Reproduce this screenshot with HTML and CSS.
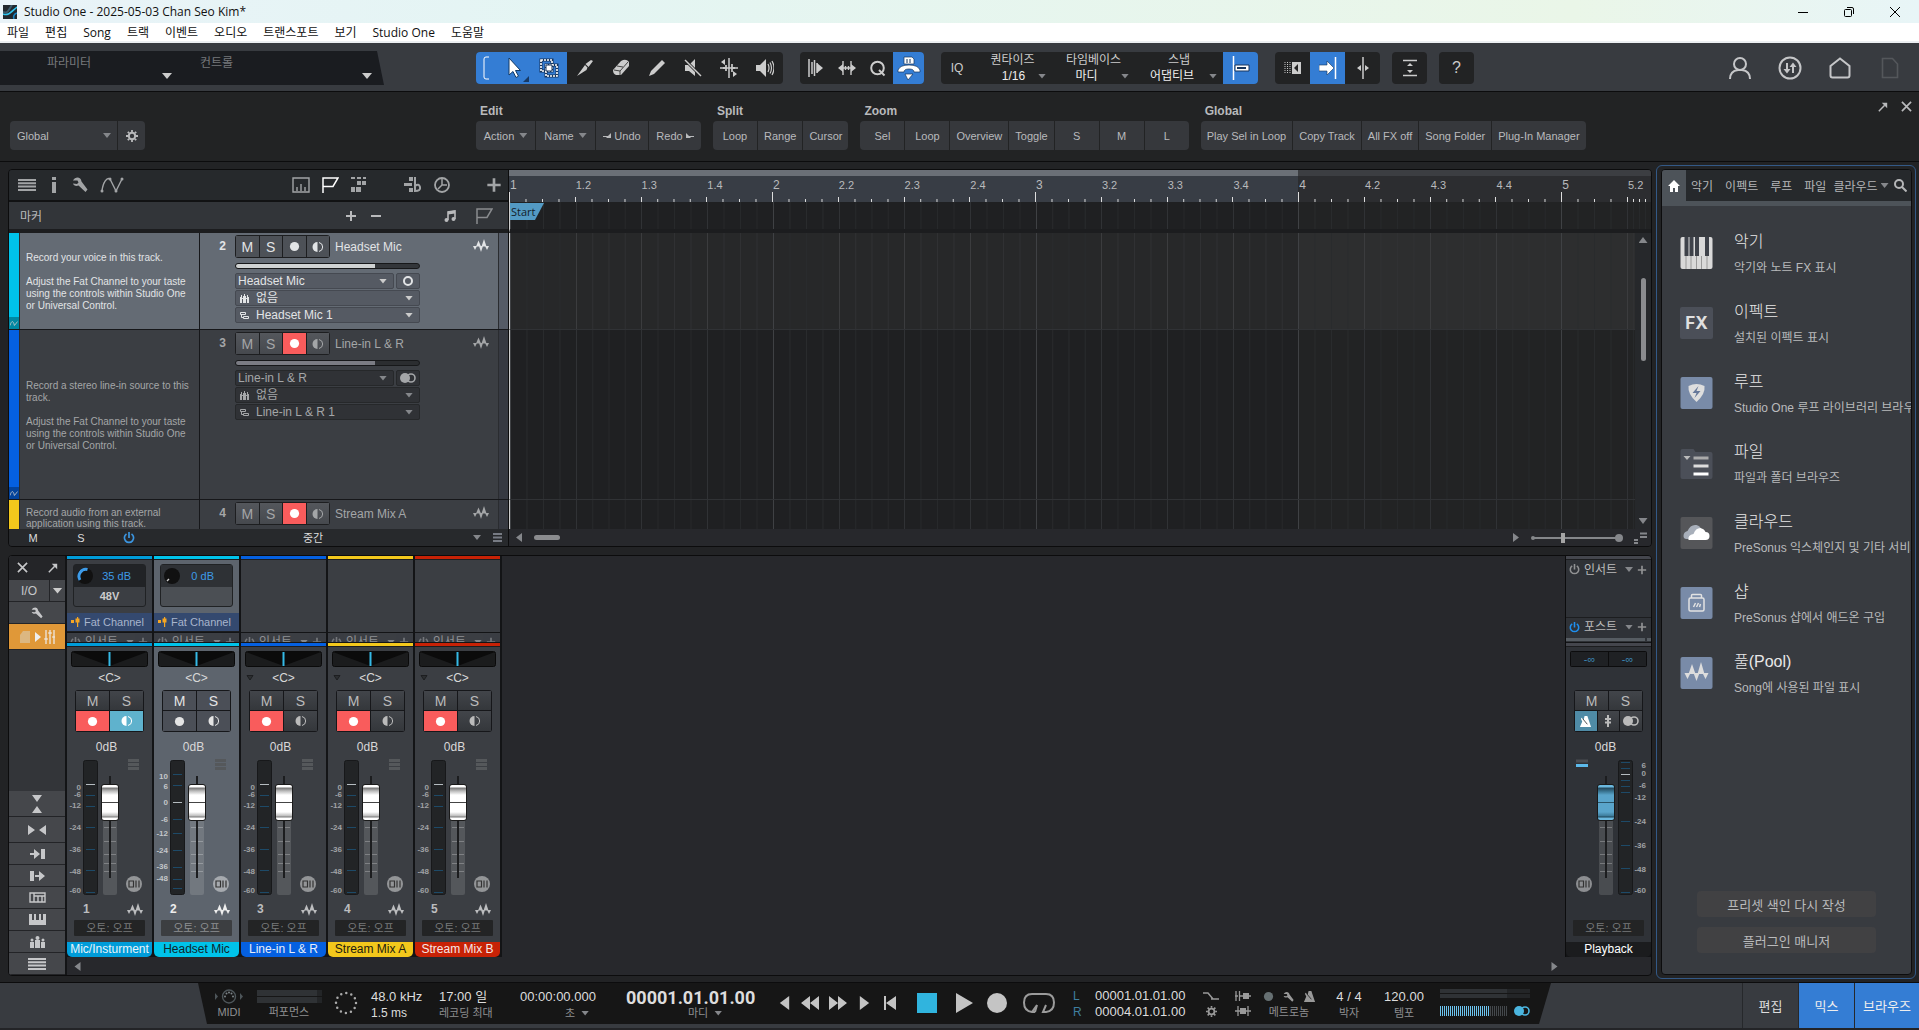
FILE: index.html
```html
<!DOCTYPE html>
<html lang="ko">
<head>
    <meta charset="UTF-8">
    <meta name="viewport" content="width=device-width, initial-scale=1.0">
    <title>Studio One - 2025-05-03 Chan Seo Kim*</title>
    <link rel="stylesheet" href="styles.css">
</head>
<body>
    <svg class="sprite" aria-hidden="true">
        <symbol id="wave" viewBox="0 0 16 13"><path fill="currentColor" d="M0 7h4l-2 4zM3 7.500l2.500-6L8 7.500zM6 7h4l-2 6zM8.500 7.500L11 0l2.500 7.500zM12 7h4l-2 4z"/></symbol>
        <symbol id="half" viewBox="0 0 12 12"><path fill="currentColor" d="M5.500 1v10a5 5 0 0 1 0-10z"/><path fill="none" stroke="currentColor" d="M7 1.500a4.600 4.600 0 0 1 0 9"/></symbol>
        <symbol id="dot" viewBox="0 0 12 12"><circle cx="6" cy="6" r="5" fill="currentColor"/></symbol>
        <symbol id="ring" viewBox="0 0 12 12"><circle cx="6" cy="6" r="4" fill="none" stroke="currentColor" stroke-width="2"/></symbol>
        <symbol id="stereo" viewBox="0 0 16 10"><circle cx="5" cy="5" r="5" fill="currentColor"/><circle cx="11" cy="5" r="4" fill="none" stroke="currentColor" stroke-width="1.600"/></symbol>
        <symbol id="wrench" viewBox="0 0 16 16"><path fill="currentColor" d="M1 3.500C3-.5 9-.5 9.500 4.500L15.500 12.500 13.500 15 6.500 8.500C4 9.500 1.500 8.500 1 6.500L5 7 6.500 5.500 5.500 3.500z"/></symbol>
        <symbol id="gear" viewBox="0 0 12 12"><circle cx="6" cy="6" r="3.200" fill="none" stroke="currentColor" stroke-width="2"/><path stroke="currentColor" stroke-width="1.800" d="M6 0v2M6 10v2M0 6h2M10 6h2M1.800 1.800l1.400 1.400M8.800 8.800l1.400 1.400M10.200 1.800L8.800 3.200M3.200 8.800l-1.400 1.400"/></symbol>
        <symbol id="flag" viewBox="0 0 17 16"><path fill="none" stroke="currentColor" stroke-width="1.500" d="M1 16V1h15l-5 8.500H1"/></symbol>
        <symbol id="power" viewBox="0 0 12 12"><path fill="none" stroke="currentColor" stroke-width="1.700" d="M3.500 2a4.600 4.600 0 1 0 5 0M6 0v6"/></symbol>
        <symbol id="plus" viewBox="0 0 12 12"><path stroke="currentColor" stroke-width="2" d="M6 1v10M1 6h10"/></symbol>
        <symbol id="close" viewBox="0 0 12 12"><path stroke="currentColor" stroke-width="1.800" d="M1 1l10 10M11 1L1 11"/></symbol>
        <symbol id="popout" viewBox="0 0 12 12"><path stroke="currentColor" stroke-width="1.800" d="M1 11l7-7"/><path fill="currentColor" d="M4.500 1H11v6.500z"/></symbol>
        <symbol id="lines" viewBox="0 0 18 12"><path stroke="currentColor" stroke-width="2" d="M0 1h18M0 4.300h18M0 7.600h18M0 11h18"/></symbol>
        <symbol id="fork" viewBox="0 0 9 9"><path fill="currentColor" d="M1 1h1v2H1zM4 0h1v2H4zM7 1h1v2H7zM0 3h2v6H0zM3 2h3v7H3zM7 3h2v6H7zM2 4h5v1H2z"/></symbol>
        <symbol id="layers" viewBox="0 0 9 9"><path fill="none" stroke="currentColor" d="M.5 1.500h5v2h-5zM3.500 5.500h5v2h-5zM1.500 4v2.500h2"/></symbol>
        <symbol id="curve" viewBox="0 0 10 8"><path fill="none" stroke="currentColor" d="M0 6.500C2 0 4 0 5.500 6.500L9.500 1.500"/></symbol>
        <symbol id="metro" viewBox="0 0 14 14"><path fill="currentColor" d="M6 1h3l4 12H1l2.500-6L2 4l1-1 2 2z"/><path stroke="#161616" stroke-width=".8" d="M4 4l5 6"/></symbol>
        <symbol id="tri-l" viewBox="0 0 8 12"><path fill="currentColor" d="M8 0v12L0 6z"/></symbol>
        <symbol id="tri-r" viewBox="0 0 8 12"><path fill="currentColor" d="M0 0v12l8-6z"/></symbol>
        <symbol id="fx-chip" viewBox="0 0 10 10"><path fill="#f5a623" d="M0 3h3v3H0zM4.500 1.500h4v4h-4zM6 0h1.200v10H6z"/></symbol>
    </svg>

    <header class="titlebar">
        <svg class="app-icon" viewBox="0 0 14 14"><rect width="14" height="14" fill="#22282d"/><path d="M0 7c5 2 6-3 9-7" fill="none" stroke="#3d5a6a" stroke-width="2"/><path d="M0 9c5 2 7-1 14-7" fill="none" stroke="#30c4ee" stroke-width="1.500"/><path d="M11 14c-1-3 0-5 3-6" fill="none" stroke="#1784c4" stroke-width="1.500"/></svg>
        <span>Studio One - 2025-05-03 Chan Seo Kim*</span>
        <div class="window-buttons">
            <button aria-label="Minimize"><svg viewBox="0 0 10 10"><path d="M0 5.500h10" stroke="#000"/></svg></button>
            <button aria-label="Restore"><svg viewBox="0 0 10 10"><rect x=".5" y="2.500" width="7" height="7" rx="1" fill="none" stroke="#000"/><path d="M3 .5h5a1.500 1.500 0 0 1 1.500 1.500v5" fill="none" stroke="#000"/></svg></button>
            <button aria-label="Close"><svg viewBox="0 0 10 10"><path d="M0 0l10 10M10 0L0 10" stroke="#000"/></svg></button>
        </div>
    </header>

    <nav class="menu">
        <a href="#">파일</a><a href="#">편집</a><a href="#">Song</a><a href="#">트랙</a><a href="#">이벤트</a><a href="#">오디오</a><a href="#">트랜스포트</a><a href="#">보기</a><a href="#">Studio One</a><a href="#">도움말</a>
    </nav>

    <div class="toolbar">
        <div class="param-display">
            <div class="param"><span>파라미터</span><i class="arrow light"></i></div>
            <div class="param wide"><span>컨트롤</span><i class="arrow light"></i></div>
        </div>
        <div class="tools main-tools">
            <button class="on bracket" aria-label="Tool link"><svg width="6" height="24" viewBox="0 0 6 24"><path d="M6 1H3Q1 1 1 3v18q0 2 2 2h3" fill="none" stroke="#fff"/></svg></button>
            <button class="on" aria-label="Arrow tool"><svg width="32" height="28" viewBox="0 0 32 28"><path d="M12 4v17l4-3.500 3 6 2.500-1.300-3-5.700h5z" fill="#fff" stroke="#123a66"/><path d="M32 22v6h-6z" fill="#173a66"/></svg></button>
            <button class="on" aria-label="Range tool"><svg width="20" height="20" viewBox="0 0 20 20"><path d="M2 2h11v11H2zM7 7h11v11H7z" fill="none" stroke="#16355c" stroke-width="3"/><path d="M2 2h11v11H2zM7 7h11v11H7z" fill="none" stroke="#fff" stroke-width="1.600" stroke-dasharray="2 1"/><path d="M7 7h6v6H7z" fill="#fff" stroke="#16355c"/></svg></button>
            <button aria-label="Split tool"><svg width="18" height="18" viewBox="0 0 18 18"><path d="M1 17L9 6l2.500 2.500-1 2.500zM9.500 5L15 1l2 1-4.500 6z" fill="currentColor"/></svg></button>
            <button aria-label="Eraser tool"><svg width="18" height="18" viewBox="0 0 18 18"><path d="M1 11L9 2q5-3 8 1v4l-8 9H4q-3-1-3-5z" fill="currentColor"/><path d="M2 11l6 1 8-9M8 12v4M5 7l6 1" fill="none" stroke="#333" stroke-width=".9"/></svg></button>
            <button aria-label="Paint tool"><svg width="18" height="18" viewBox="0 0 18 18"><path d="M1 17l2-5L14 1l3 3L6 15z" fill="currentColor"/></svg></button>
            <button aria-label="Mute tool"><svg width="18" height="18" viewBox="0 0 18 18"><path d="M1 6h4l6-6v17l-6-5H1z" fill="currentColor"/><path d="M1 1l16 16" stroke="#222" stroke-width="3"/><path d="M1 1l16 16" stroke="currentColor" stroke-width="1.500"/></svg></button>
            <button aria-label="Bend tool"><svg width="18" height="20" viewBox="0 0 18 20"><path d="M9 0v20" stroke="currentColor" stroke-width="1.500"/><path d="M0 10h18M6 7v6M12 6v8M4 9v2M14 9v2" stroke="currentColor" stroke-width="1.700"/><path d="M1 4l4-3v6zM17 16l-4-3v6z" fill="currentColor"/></svg></button>
            <button aria-label="Listen tool"><svg width="18" height="18" viewBox="0 0 18 18"><path d="M0 6h4l6-6v18l-6-6H0z" fill="currentColor"/><path d="M12 5q2 4 0 8M14 3.500q3 5.500 0 11M16 2q4 7 0 14" fill="none" stroke="currentColor" stroke-width="1.200"/></svg></button>
        </div>
        <div class="tools audio-tools">
            <button aria-label="Tab to transient"><svg width="16" height="18" viewBox="0 0 16 18"><path d="M1 0v18M4 3v12M6.500 1v16M9 4v10" stroke="currentColor" stroke-width="1.500"/><path d="M9 4l6 5-6 5z" fill="currentColor"/></svg></button>
            <button aria-label="Stretch"><svg width="18" height="18" viewBox="0 0 18 18"><path d="M5 2v14M13 2v14M5 9h8M7.500 7v4M10.500 7v4" stroke="currentColor" stroke-width="1.400"/><path d="M0 9l5-4v8zM18 9l-5-4v8z" fill="currentColor"/></svg></button>
            <button aria-label="Quantize"><svg width="16" height="17" viewBox="0 0 16 17"><circle cx="7.500" cy="8" r="6.300" fill="none" stroke="currentColor" stroke-width="2"/><path d="M9 10l5.500 5.500" stroke="currentColor" stroke-width="2"/></svg></button>
            <button class="on" aria-label="Macro bar"><svg width="24" height="24" viewBox="0 0 24 24"><path d="M1 14q2-5 11-5t11 5v2h-6q0-3-5-3t-5 3H1z" fill="#fff" stroke="#16355c" stroke-width=".7"/><path d="M8 18h8l-5 6zM7 1h8l2 2v5H7z" fill="#fff" stroke="#16355c" stroke-width=".7"/><path d="M10 3v4M13 3v4" stroke="#16355c"/></svg></button>
        </div>
        <div class="tools">
            <button class="iq">IQ</button>
            <div class="drop q1"><label for="quantize">퀀타이즈</label><select id="quantize"><option>1/16</option></select><i class="arrow"></i></div>
            <div class="drop q2"><label for="timebase">타임베이스</label><select id="timebase"><option>마디</option></select><i class="arrow"></i></div>
            <div class="drop q3"><label for="snap">스냅</label><select id="snap"><option>어댑티브</option></select><i class="arrow"></i></div>
            <button class="on" aria-label="Snap to grid"><svg width="18" height="24" viewBox="0 0 18 24"><path d="M1.500 0v24" stroke="#fff" stroke-width="1.500"/><path d="M3 9h14v6H3z" fill="#fff" stroke="#16355c"/><path d="M5 12h9" stroke="#16355c" stroke-width="2"/></svg></button>
        </div>
        <div class="tools">
            <button aria-label="Autoscroll"><svg width="18" height="14" viewBox="0 0 18 14"><path d="M1 1v12M3.500 1v12M6 1v12" stroke="currentColor" stroke-dasharray="1 1"/><path d="M8 1h9v12H8z" fill="currentColor"/><path d="M14 3v8l-4-4z" fill="#222"/></svg></button>
            <button class="on" aria-label="Follow playback"><svg width="18" height="22" viewBox="0 0 18 22"><path d="M0 8h8V4l7 7-7 7v-4H0z" fill="#fff" stroke="#16355c" stroke-width=".6"/><path d="M16.500 0v22" stroke="#fff" stroke-width="1.500"/></svg></button>
            <button aria-label="Cursor follow"><svg width="12" height="22" viewBox="0 0 12 22"><path d="M6 0v22" stroke="currentColor" stroke-width="1.500"/><path d="M0 11l4-3v6zM12 11L8 8v6z" fill="currentColor"/></svg></button>
        </div>
        <div class="tools small-gap">
            <button aria-label="Auto zoom"><svg width="16" height="18" viewBox="0 0 16 18"><path d="M1 1.500h14M1 16.500h14" stroke="currentColor" stroke-width="1.500"/><path d="M8 4l3 3H5zM8 14l3-3H5z" fill="currentColor"/></svg></button>
        </div>
        <div class="tools small-gap">
            <button class="help" aria-label="Help">?</button>
        </div>
        <div class="global-links">
            <button aria-label="Account"><svg width="24" height="22" viewBox="0 0 24 22"><circle cx="12" cy="7" r="6" fill="none" stroke="currentColor" stroke-width="2"/><path d="M2 22q0-8 8-9h4q8 1 8 9" fill="none" stroke="currentColor" stroke-width="2"/></svg></button>
            <button aria-label="Sync"><svg width="24" height="24" viewBox="0 0 24 24"><circle cx="12" cy="12" r="10.500" fill="none" stroke="currentColor" stroke-width="2"/><path d="M9 7v8M15 9v8" stroke="currentColor" stroke-width="2"/><path d="M5.500 13h7L9 17.500zM11.500 11h7L15 6.500z" fill="currentColor"/></svg></button>
            <button aria-label="Start page"><svg width="22" height="22" viewBox="0 0 22 22"><path d="M1.500 9L11 1.500 20.500 9v9.500q0 2-2 2h-15q-2 0-2-2z" fill="none" stroke="currentColor" stroke-width="2"/></svg></button>
            <button class="dim" aria-label="Document"><svg width="18" height="22" viewBox="0 0 18 22"><path d="M1.500 1.500h10L16.500 7v13.500h-15z" fill="none" stroke="currentColor" stroke-width="1.600"/></svg></button>
        </div>
    </div>

    <div class="macro-bar">
        <div class="macro-page">
            <div class="select-box"><select aria-label="Macro page"><option>Global</option></select><i class="arrow"></i></div>
            <button aria-label="Macro settings"><svg width="12" height="12"><use href="#gear"/></svg></button>
        </div>
        <div class="macro-group"><h2>Edit</h2><div class="macros"><button class="menu-btn">Action <i class="arrow"></i></button><button class="menu-btn">Name <i class="arrow"></i></button><button class="step"><svg width="8" height="6" viewBox="0 0 8 6"><path d="M0 3.500h5" stroke="currentColor"/><path d="M8 0v5H3z" fill="currentColor"/></svg>Undo</button><button class="step">Redo<svg width="8" height="6" viewBox="0 0 8 6"><path d="M3 3.500h5" stroke="currentColor"/><path d="M0 0v5h5z" fill="currentColor"/></svg></button></div></div>
        <div class="macro-group"><h2>Split</h2><div class="macros"><button>Loop</button><button>Range</button><button>Cursor</button></div></div>
        <div class="macro-group"><h2>Zoom</h2><div class="macros"><button>Sel</button><button>Loop</button><button>Overview</button><button>Toggle</button><button>S</button><button>M</button><button>L</button></div></div>
        <div class="macro-group"><h2>Global</h2><div class="macros"><button>Play Sel in Loop</button><button>Copy Track</button><button>All FX off</button><button>Song Folder</button><button>Plug-In Manager</button></div></div>
        <div class="macro-close">
            <button aria-label="Detach"><svg width="10" height="10"><use href="#popout"/></svg></button>
            <button aria-label="Close"><svg width="11" height="11"><use href="#close"/></svg></button>
        </div>
    </div>

    <main class="workspace">
        <div class="editors">
            <section class="arrange panel">
                <div class="track-side">
                    <div class="arrange-head">
                        <button aria-label="Track list"><svg width="18" height="12"><use href="#lines"/></svg></button>
                        <button aria-label="Inspector"><svg width="4" height="16" viewBox="0 0 4 16"><path d="M0 0h4v3H0zM0 5h4v11H0z" fill="currentColor"/></svg></button>
                        <button aria-label="Tools"><svg width="16" height="16"><use href="#wrench"/></svg></button>
                        <button aria-label="Automation"><svg width="24" height="16" viewBox="0 0 24 16"><path d="M2 14C3 5 7 0 10 2l6 12 6-12" fill="none" stroke="currentColor" stroke-width="1.400"/><circle cx="2" cy="14" r="1.500" fill="currentColor"/><circle cx="10" cy="2" r="1.500" fill="currentColor"/><circle cx="16" cy="14" r="1.500" fill="currentColor"/><circle cx="22" cy="2" r="1.500" fill="currentColor"/></svg></button>
                        <button class="push" aria-label="Timeline"><svg width="18" height="16" viewBox="0 0 18 16"><path d="M1 1h16v14H1zM5 14V10M9 14V7M13 14v-4" fill="none" stroke="currentColor" stroke-width="1.400"/></svg></button>
                        <button class="lit" aria-label="Marker"><svg width="17" height="16"><use href="#flag"/></svg></button>
                        <button aria-label="Arranger"><svg width="16" height="16" viewBox="0 0 16 16"><path d="M0 0h4v2H0zM6 0h4v2H6zM12 0h3v2h-3zM6 4h4v4H6zM11 4h4v4h-4zM0 10h4v5H0zM5 10h5v5H5z" fill="currentColor"/></svg></button>
                        <button class="gap-l" aria-label="Key track"><svg width="18" height="16" viewBox="0 0 18 16"><path d="M5 0h4v4H5zM0 6h8v3H0zM5 11h4v4H5z" fill="currentColor"/><path d="M11 0v14q6 0 5-4t-5-1" fill="none" stroke="currentColor" stroke-width="2"/></svg></button>
                        <button aria-label="Tempo"><svg width="16" height="16" viewBox="0 0 16 16"><circle cx="8" cy="8" r="7" fill="none" stroke="currentColor" stroke-width="1.800"/><path d="M8 2v6l-4 4M8 8h5" fill="none" stroke="currentColor" stroke-width="1.500"/></svg></button>
                        <button class="gap-xl" aria-label="Add track"><svg width="16" height="16"><use href="#plus"/></svg></button>
                    </div>
                    <div class="marker-head">
                        <span>마커</span>
                        <button class="push" aria-label="Add marker"><svg width="12" height="12"><use href="#plus"/></svg></button>
                        <button aria-label="Remove marker"><svg width="10" height="12" viewBox="0 0 10 12"><path d="M0 6h10" stroke="currentColor" stroke-width="2"/></svg></button>
                        <button class="note-btn" aria-label="Note"><svg width="12" height="12" viewBox="0 0 12 12"><path d="M4 10V2L11 1v8" fill="none" stroke="currentColor" stroke-width="1.600"/><path d="M4 1.500L11 .5v3L4 4.500z" fill="currentColor"/><circle cx="2.500" cy="10" r="2" fill="currentColor"/><circle cx="9.500" cy="9" r="2" fill="currentColor"/></svg></button>
                        <button class="dim" aria-label="Flag"><svg width="17" height="16"><use href="#flag"/></svg></button>
                    </div>
                    <div class="tracks" id="tracks"></div>
                    <div class="track-foot">
                        <button>M</button><button>S</button><button class="blue" aria-label="Power"><svg width="12" height="12"><use href="#power"/></svg></button>
                        <label class="size-pick"><select aria-label="Track height"><option>중간</option></select></label>
                        <i class="arrow"></i>
                        <svg class="foot-lines" width="9" height="9" viewBox="0 0 9 9"><path d="M0 1h9M0 4.500h9M0 8h9" stroke="#777b84" stroke-width="2"/></svg>
                    </div>
                </div>
                <div class="time-side">
                    <div class="ruler beats" id="ruler"></div>
                    <div class="marker-lane beats" id="marker-lane"><span class="marker-flag">Start</span></div>
                    <div class="lanes">
                        <div class="lane-list">
                            <div class="lane beats picked"></div>
                            <div class="lane beats tall"></div>
                            <div class="lane beats rest"></div>
                        </div>
                        <div class="vscroll"><i class="up"></i><span></span><i class="down"></i></div>
                    </div>
                    <div class="hscroll">
                        <svg width="6" height="9"><use href="#tri-l"/></svg><span class="thumb"></span>
                        <svg class="push" width="6" height="9"><use href="#tri-r"/></svg>
                        <svg width="94" height="10" viewBox="0 0 94 10"><path d="M2 5h84" stroke="#85878b" stroke-width="2"/><circle cx="2" cy="5" r="2" fill="#85878b"/><rect x="30" width="4" height="10" fill="#a5a5a5"/><circle cx="88" cy="5" r="4" fill="#85878b"/></svg>
                        <svg width="14" height="12" viewBox="0 0 14 12"><path d="M6 1.500h7M6 5h7M0 8h4M0 11h4" stroke="#85878b" stroke-width="2"/></svg>
                    </div>
                </div>
            </section>

            <section class="mixer panel">
                <div class="mixer-side">
                    <div class="side-row plain"><button aria-label="Close mixer"><svg width="11" height="11"><use href="#close"/></svg></button><button aria-label="Detach mixer"><svg width="10" height="10"><use href="#popout"/></svg></button></div>
                    <div class="side-row io"><button>I/O</button><button aria-label="I/O menu"><i class="arrow light"></i></button></div>
                    <button class="side-row" aria-label="Options"><svg width="12" height="12"><use href="#wrench"/></svg></button>
                    <button class="side-row orange" aria-label="Scenes"><svg width="36" height="14" viewBox="0 0 36 14"><path d="M4 1h7v12H1V5z" fill="#dcb781"/><path d="M16 2l6 5-6 5z" fill="#eee"/><path d="M27 0v14M31 0v14M35 0v14M25 9h4M29 3h4M33 7h3" stroke="#eee" stroke-width="1.200"/></svg></button>
                    <div class="side-fill"></div>
                    <button class="side-row big" aria-label="Narrow height"><svg width="12" height="18" viewBox="0 0 12 18"><path d="M1 0h10L6 7zM1 18h10l-5-7z" fill="currentColor"/></svg></button>
                    <button class="side-row big" aria-label="Narrow width"><svg width="18" height="10" viewBox="0 0 18 10"><path d="M0 0l7 5-7 5zM18 0l-7 5 7 5z" fill="currentColor"/></svg></button>
                    <button class="side-row" aria-label="Inputs"><svg width="15" height="10" viewBox="0 0 15 10"><path d="M0 4h4V0l6 5-6 5V6H0zM11 0h4v10h-4z" fill="currentColor"/></svg></button>
                    <button class="side-row" aria-label="Outputs"><svg width="15" height="10" viewBox="0 0 15 10"><path d="M0 0h4v10H0zM5 4h4V0l6 5-6 5V6H5z" fill="currentColor"/></svg></button>
                    <button class="side-row" aria-label="External"><svg width="17" height="11" viewBox="0 0 17 11"><path d="M1 1h15v9H1zM5 1v9M5 4h11M9 4v6M13 4v6" fill="none" stroke="currentColor" stroke-width="1.400"/></svg></button>
                    <button class="side-row" aria-label="Instruments"><svg width="17" height="11" viewBox="0 0 17 11"><path d="M0 0h3v6h2V0h2v6h3V0h2v6h2V0h3v11H0z" fill="currentColor"/></svg></button>
                    <button class="side-row" aria-label="Groups"><svg width="15" height="12" viewBox="0 0 15 12"><circle cx="7.500" cy="2" r="2" fill="currentColor"/><circle cx="2" cy="4" r="1.500" fill="currentColor"/><circle cx="13" cy="4" r="1.500" fill="currentColor"/><path d="M0 6h4v6H0zM5 4h5v8H5zM11 6h4v6h-4z" fill="currentColor"/></svg></button>
                    <button class="side-row" aria-label="Channel list"><svg width="18" height="12"><use href="#lines"/></svg></button>
                </div>
                <div class="console">
                    <div class="strips" id="strips"></div>
                    <div class="console-scroll"><svg width="7" height="9"><use href="#tri-l"/></svg><svg width="7" height="9"><use href="#tri-r"/></svg></div>
                </div>
                <div class="strip master" id="master"></div>
            </section>
        </div>

        <aside class="browser">
            <div class="browser-panel">
                <nav class="browser-tabs">
                    <a href="#" class="home" aria-label="Home"><svg width="12" height="12" viewBox="0 0 12 12"><path d="M6 0l6 6h-2v6H7V8H5v4H2V6H0z" fill="#fff"/></svg></a>
                    <a href="#">악기</a><a href="#">이펙트</a><a href="#">루프</a><a href="#">파일</a><a href="#" class="cloud-tab">클라우드</a>
                    <i class="arrow"></i>
                    <button aria-label="Search"><svg width="13" height="13" viewBox="0 0 13 13"><circle cx="5" cy="5" r="4" fill="none" stroke="currentColor" stroke-width="2"/><path d="M8 8l4.500 4.500" stroke="currentColor" stroke-width="2"/></svg></button>
                </nav>
                <ul class="browser-list">
                    <li><svg class="tile" viewBox="0 0 32 32"><rect width="32" height="32" rx="2" fill="#d9d9d9"/><path d="M5.500 19v13M10.500 19v13M16 19v13M21 19v13M26.500 0v32" stroke="#999"/><path d="M4 0h4v19H4zM9 0h4v19H9zM14.500 0h4v19h-4zM24.500 0h4v19h-4z" fill="#3e424a"/></svg><div><h3>악기</h3><p>악기와 노트 FX 표시</p></div></li>
                    <li><span class="tile fx">FX</span><div><h3>이펙트</h3><p>설치된 이펙트 표시</p></div></li>
                    <li><svg class="tile" viewBox="0 0 32 32"><rect width="32" height="32" rx="2" fill="#798ba8"/><path d="M8 9q8-4 16 0 1 8-8 16-9-8-8-16z" fill="#dedede"/><path d="M18 9l-6 7h4l-2 5 6-7h-4z" fill="#66789a"/></svg><div><h3>루프</h3><p>Studio One 루프 라이브러리 브라우저</p></div></li>
                    <li><svg class="tile" viewBox="0 0 32 32"><path d="M2 2h11l2 3h15q2 0 2 2v23q0 2-2 2H2q-2 0-2-2V4q0-2 2-2z" fill="#4b4f58"/><path d="M3 9h7l-3.500 4z" fill="#bbb"/><path d="M13 11h15" stroke="#aaa" stroke-width="3"/><path d="M13 19h15" stroke="#ddd" stroke-width="3"/><path d="M13 27h15" stroke="#fff" stroke-width="3"/></svg><div><h3>파일</h3><p>파일과 폴더 브라우즈</p></div></li>
                    <li><svg class="tile" viewBox="0 0 32 32"><rect width="32" height="32" rx="2" fill="#555659"/><path d="M3 19q0-4 4-5 3-7 9-6 4 1 5 5v9H6q-3 0-3-3z" fill="#a8afba"/><path d="M8 23q-1-5 5-6 2-6 7-6 4 1 5 4 4 0 4 4t-4 4z" fill="#fff"/></svg><div><h3>클라우드</h3><p>PreSonus 익스체인지 및 기타 서비스</p></div></li>
                    <li><svg class="tile" viewBox="0 0 32 32"><rect width="32" height="32" rx="2" fill="#798ba8"/><path d="M11 11V8.500q0-1 1-1h8q1 0 1 1V11M10 11h12q1.500 0 1.500 1.500v10q0 1.500-1.500 1.500H10q-1.500 0-1.500-1.500v-10Q8.500 11 10 11zM13 20l2-4M16 20l2-4M19 20l1-3" fill="none" stroke="#e2e2e2" stroke-width="1.500"/></svg><div><h3>샵</h3><p>PreSonus 샵에서 애드온 구입</p></div></li>
                    <li><svg class="tile" viewBox="0 0 32 32"><rect width="32" height="32" rx="2" fill="#798ba8"/><path d="M4 16h6l-3 6zM8 17l3.500-10L15 17zM13 16h6l-3 8zM17 17l3.500-12L24 17zM22 16h6l-3 6z" fill="#ddd"/></svg><div><h3>풀(Pool)</h3><p>Song에 사용된 파일 표시</p></div></li>
                </ul>
                <div class="browser-actions"><button>프리셋 색인 다시 작성</button><button>플러그인 매니저</button></div>
            </div>
        </aside>
    </main>

    <footer class="transport-bar">
        <div class="transport">
            <div class="cell center"><svg width="28" height="15" viewBox="0 0 28 15"><path d="M0 4l3 3.500L0 11zM25 4l3 3.500-3 3.500z" fill="#4d5559"/><circle cx="14" cy="7.500" r="6.500" fill="none" stroke="#4d5559" stroke-width="1.400"/><circle cx="10" cy="7.500" r="1" fill="#7b8387"/><circle cx="11.500" cy="4.500" r="1" fill="#7b8387"/><circle cx="14" cy="3.500" r="1" fill="#7b8387"/><circle cx="16.500" cy="4.500" r="1" fill="#7b8387"/><circle cx="18" cy="7.500" r="1" fill="#7b8387"/></svg><small>MIDI</small></div>
            <div class="cell center"><span class="perf"></span><span class="perf"></span><small>퍼포먼스</small></div>
            <div class="cell center"><svg width="24" height="28" viewBox="0 0 24 28"><circle cx="12" cy="14" r="10" fill="none" stroke="#aaa" stroke-width="2.500" stroke-linecap="round" stroke-dasharray="0 5.236"/></svg></div>
            <div class="cell rate"><b>48.0 kHz</b><b class="ms">1.5 ms</b></div>
            <div class="cell"><b>17:00 일</b><small>레코딩 최대</small></div>
            <div class="cell"><b>00:00:00.000</b><small class="unit">초 <i class="arrow"></i></small></div>
            <div class="cell"><strong>00001.01.01.00</strong><small class="unit bars">마디 <i class="arrow"></i></small></div>
            <div class="buttons">
                <button class="w1" aria-label="Nudge back"><svg width="11" height="14"><use href="#tri-l"/></svg></button>
                <button class="w2" aria-label="Rewind"><svg width="18" height="14" viewBox="0 0 18 14"><path d="M9 0v14L0 7zM18 0v14L9 7z" fill="currentColor"/></svg></button>
                <button class="w2" aria-label="Forward"><svg width="18" height="14" viewBox="0 0 18 14"><path d="M0 0v14l9-7zM9 0v14l9-7z" fill="currentColor"/></svg></button>
                <button class="w1" aria-label="Nudge forward"><svg width="11" height="14"><use href="#tri-r"/></svg></button>
                <button class="w2" aria-label="Return to zero"><svg width="12" height="14" viewBox="0 0 12 14"><path d="M0 0h2v14H0zM12 0v14L2 7z" fill="currentColor"/></svg></button>
                <button class="w4" aria-label="Stop"><svg width="20" height="20"><rect width="20" height="20" fill="#30b4de"/></svg></button>
                <button class="w2" aria-label="Play"><svg width="17" height="20" viewBox="0 0 17 20"><path d="M0 0v20l17-10z" fill="currentColor"/></svg></button>
                <button class="w3" aria-label="Record"><svg width="20" height="20" viewBox="0 0 20 20"><circle cx="10" cy="10" r="10" fill="currentColor"/></svg></button>
                <button class="w4" aria-label="Loop"><svg width="32" height="20" viewBox="0 0 32 20"><path d="M12 19H9q-8-1-8-9.500T9 1h14q8 0 8 8.500T23 19h-3l3-7M12 19l2-7-5 7" fill="none" stroke="#9b9b9b" stroke-width="2"/></svg></button>
            </div>
            <div class="cell locators"><div><em>L</em><b>00001.01.01.00</b></div><div><em>R</em><b>00004.01.01.00</b></div></div>
            <div class="mini-grid">
                <svg width="16" height="8" viewBox="0 0 16 8"><path d="M0 1h5l5 6h6M8 7h8" fill="none" stroke="#999" stroke-width="1.500"/></svg>
                <svg width="16" height="10" viewBox="0 0 16 10"><path d="M1 0v10M4.500 0v10M4.500 5H16M0 5h3" stroke="#999" stroke-width="1.300"/><path d="M8 2h6v6H8z" fill="#999"/></svg>
                <svg width="11" height="11" color="#999"><use href="#gear"/></svg>
                <svg width="16" height="10" viewBox="0 0 16 10"><path d="M3 0v10M13 0v10M0 5h16" stroke="#999" stroke-width="1.300"/><path d="M5 2h6v6H5z" fill="#999"/></svg>
            </div>
            <div class="cell center"><div class="metro-icons"><svg width="11" height="11" color="#667072"><use href="#dot"/></svg><svg width="11" height="12"><use href="#wrench"/></svg><svg width="13" height="13"><use href="#metro"/></svg></div><small>메트로놈</small></div>
            <div class="cell center"><b>4 / 4</b><small>박자</small></div>
            <div class="cell center"><b>120.00</b><small>템포</small></div>
            <div class="cell out"><span class="perf"></span><span class="perf"></span><div class="out-row"><span class="level"></span><svg width="16" height="10" color="#4bb5df"><use href="#stereo"/></svg></div></div>
        </div>
        <div class="views"><button>편집</button><button class="on">믹스</button><button class="on">브라우즈</button></div>
    </footer>
    <script src="script.js"></script>
</body>
</html>
```
FILE: styles.css
```css
* {
    box-sizing: border-box;
}

body {
    margin: 0;
    height: 100vh;
    display: flex;
    flex-direction: column;
    overflow: hidden;
    background: #222325;
    color: #b9babc;
    font-family: "Liberation Sans", "Noto Sans CJK KR", sans-serif;
    font-size: 12px;
}

button, select {
    font: inherit;
    color: inherit;
    background: none;
    border: none;
    padding: 0;
    margin: 0;
}

button {
    display: flex;
    align-items: center;
    justify-content: center;
}

select {
    appearance: none;
    outline: none;
}

a {
    color: inherit;
    text-decoration: none;
}

svg {
    display: block;
    flex: none;
}

h2, h3, p, ul {
    margin: 0;
    padding: 0;
}

.sprite {
    position: absolute;
    width: 0;
    height: 0;
}

.push {
    margin-left: auto;
}

.arrow {
    display: block;
    flex: none;
    width: 8px;
    height: 5px;
    background: #85878b;
    clip-path: polygon(0 0, 100% 0, 50% 100%);
}

.arrow.light {
    width: 10px;
    height: 6px;
    background: #ccc;
}

.panel {
    border: 1px solid #0c0c0d;
    border-radius: 4px;
    overflow: hidden;
}

/* Window chrome */
.titlebar {
    height: 23px;
    flex: none;
    display: flex;
    align-items: center;
    gap: 7px;
    padding-left: 3px;
    color: #111;
    font-family: "Open Sans", sans-serif;
    background: linear-gradient(to right, #e9f3f8, #e4f5f3 30%, #eaf6e8 82%, #e8f5f7);
}

.app-icon {
    width: 14px;
    height: 14px;
}

.window-buttons {
    display: flex;
    margin-left: auto;
    padding-right: 1px;
}

.window-buttons button {
    width: 46px;
    height: 20px;
}

.window-buttons svg {
    width: 10px;
    height: 10px;
}

.menu {
    height: 20px;
    flex: none;
    display: flex;
    align-items: center;
    gap: 16px;
    padding-left: 7px;
    padding-top: 1px;
    background: #fff;
    border-bottom: 2px solid #eceff2;
    color: #111;
    font-family: "Open Sans", "Noto Sans CJK KR", sans-serif;
    line-height: 17px;
}

/* Toolbar */
.toolbar {
    height: 49px;
    flex: none;
    display: flex;
    align-items: center;
    padding-top: 2px;
    background: #383b40;
    border-bottom: 1px solid #0c0c0d;
}

.param-display {
    width: 384px;
    height: 34px;
    display: flex;
    margin-right: 92px;
    background: #1a1c20;
    color: #77797c;
    font-size: 12px;
    clip-path: polygon(0 0, 377px 0, 100% 100%, 0 100%);
}

.param {
    width: 173px;
    display: flex;
    justify-content: space-between;
    align-items: flex-end;
    padding: 3px 1px 6px 47px;
}

.param.wide {
    width: 200px;
    padding-left: 27px;
}

.param span {
    align-self: flex-start;
    line-height: 18px;
}

.tools {
    height: 32px;
    display: flex;
    align-items: stretch;
    margin-right: 17px;
    border-radius: 4px;
    background: #222324;
    color: #ccc;
    overflow: hidden;
}

.tools button {
    width: 35px;
}

.main-tools button {
    width: 36px;
}

.main-tools .bracket {
    width: 19px;
}

.audio-tools button {
    width: 31px;
}

.tools .on {
    background: #347dd4;
}

.tools .iq {
    width: 32px;
}

.tools .help {
    font-size: 16px;
}

.small-gap {
    margin-left: -5px;
}

.drop {
    display: grid;
    grid-template-columns: 1fr 8px;
    align-items: center;
    padding-right: 6px;
    text-align: center;
    line-height: 16px;
}

.drop.q1 {
    width: 79px;
}

.drop.q2 {
    width: 83px;
}

.drop.q3 {
    width: 88px;
}

.drop label {
    grid-column: 1 / -1;
    margin-right: -6px;
    white-space: nowrap;
}

.drop select {
    grid-column: 1;
    text-align: center;
    text-align-last: center;
    color: #eee;
}

.q1 select {
    padding-left: 16px;
}

.global-links {
    display: flex;
    margin-left: auto;
    padding-right: 4px;
    color: #c5c6c8;
}

.global-links button {
    width: 50px;
}

.global-links .dim {
    color: #54575b;
}

/* Macro bar */
.macro-bar {
    height: 70px;
    flex: none;
    display: flex;
    align-items: flex-end;
    gap: 12px;
    padding: 0 7px 11px 10px;
    border-bottom: 1px solid #0c0c0d;
    background: #222324;
    font-size: 11px;
}

.macro-page {
    width: 454px;
    height: 29px;
    display: flex;
    gap: 1px;
}

.select-box {
    width: 107px;
    display: flex;
    align-items: center;
    padding: 0 6px 0 7px;
    background: #36383c;
    border-radius: 4px 0 0 4px;
}

.select-box select {
    flex: 1;
}

.macro-page button {
    width: 27px;
    background: #36383c;
    border-radius: 0 4px 4px 0;
}

.macro-group h2 {
    padding-left: 4px;
    margin-bottom: 1px;
    font-size: 12px;
    line-height: 18px;
}

.macros {
    display: flex;
    gap: 1px;
    height: 29px;
    border-radius: 4px;
    overflow: hidden;
}

.macros button {
    min-width: 44px;
    padding: 0 6px;
    gap: 5px;
    background: #36383c;
    white-space: nowrap;
}

.macros .menu-btn {
    min-width: 59px;
}

.macros .step {
    min-width: 52px;
    gap: 3px;
}

.macro-close {
    align-self: flex-start;
    display: flex;
    gap: 13px;
    margin-left: auto;
    padding-top: 9px;
}

/* Workspace */
.workspace {
    flex: 1;
    min-height: 0;
    display: flex;
    gap: 4px;
    padding: 3px 3px 3px 8px;
}

.editors {
    flex: 1;
    min-width: 0;
    display: flex;
    flex-direction: column;
    gap: 8px;
    padding: 4px 0 3px;
}

.arrange {
    flex: 1;
    min-height: 0;
    display: flex;
}

.track-side {
    width: 500px;
    display: flex;
    flex-direction: column;
    border-right: 1px solid #0c0c0d;
}

.arrange-head {
    height: 32px;
    flex: none;
    display: flex;
    align-items: center;
    gap: 12px;
    padding: 0 6px 0 9px;
    border-bottom: 2px solid #111213;
    background: #26292c;
    color: #a2a4a6;
}

.arrange-head .lit {
    color: #fff;
}

.arrange-head button:nth-child(2) {
    padding: 0 4px;
}

.arrange-head .gap-l {
    margin-left: 25px;
}

.arrange-head .gap-xl {
    margin-left: 24px;
}

.marker-head {
    height: 31px;
    flex: none;
    display: flex;
    align-items: center;
    gap: 14px;
    padding: 0 15px 0 11px;
    border-bottom: 4px solid #1c1d1f;
    background: #323539;
}

.marker-head .dim {
    color: #8a8c8f;
    margin-left: 6px;
}

.marker-head .note-btn {
    margin-left: 49px;
}

.tracks {
    flex: 1;
    min-height: 0;
    overflow: hidden;
    background: #3b3e43;
}

.track {
    display: grid;
    grid-template-columns: 10px 181px 1fr 10px;
    height: 170px;
    border-bottom: 1px solid #16171a;
    background: #3b3e43;
    color: #a4a6a8;
}

.track.picked {
    height: 97px;
    background: #646b74;
    color: #e2e4e6;
}

.track-color {
    display: flex;
    align-items: flex-end;
}

.track-color span {
    display: flex;
    align-items: center;
    justify-content: center;
    width: 10px;
    height: 12px;
    background: rgba(0, 0, 0, .3);
    color: #ccc;
}

.track-note {
    display: flex;
    align-items: center;
    padding: 2px 6px 0;
    border-left: 1px solid #2a2c30;
    border-right: 1px solid #16171a;
    font-size: 10px;
    line-height: 12px;
    white-space: pre-line;
}

.track-edge {
    border-left: 1px solid #2a2c30;
    background: rgba(40, 42, 60, .25);
}

.track.cut .track-note {
    align-items: flex-start;
    padding-top: 7px;
    line-height: 11px;
}

.track-main {
    display: grid;
    grid-template-columns: 29px 95px 1fr 16px;
    column-gap: 5px;
    padding: 2px 9px 0 1px;
    align-content: start;
}

.track-no {
    text-align: right;
    font-weight: bold;
    line-height: 22px;
    padding-right: 4px;
}

.track-name {
    line-height: 24px;
}

.track-main > svg {
    margin-top: 4px;
}

.track-buttons {
    display: flex;
    gap: 1px;
    height: 23px;
    padding: 1px;
    background: #1d1e20;
    border-radius: 3px;
    font-size: 14px;
}

.track-buttons button, .ms-grid button {
    flex: 1;
    background: linear-gradient(#54575c, #46494e);
}

.track-buttons .rec, .ms-grid .rec {
    background: #f95c5c;
    color: #fff;
}

.picked .track-buttons button {
    background: #4d5157;
}

.track-rows {
    grid-column: 1 / -1;
    width: 185px;
    margin: 3px 0 0 34px;
    display: flex;
    flex-direction: column;
    gap: 1px;
}

.volume {
    appearance: none;
    width: 185px;
    height: 6px;
    margin: 1px 0 3px;
    border: 1px solid #17181a;
    border-radius: 3px;
    background: linear-gradient(to right, #7b7c84 76%, #2b2d30 76%);
}

.picked .volume {
    background: linear-gradient(to right, #cfd2d2 76%, #33363a 76%);
}

.volume::-webkit-slider-thumb {
    appearance: none;
    width: 1px;
    height: 1px;
}

.route {
    height: 16px;
    display: flex;
    gap: 2px;
}

.route > * {
    display: flex;
    align-items: center;
    justify-content: center;
    border: 1px solid #26282a;
    border-radius: 2px;
    background: #303236;
}

.picked .route > * {
    border-color: #454951;
    background: #555a63;
}

.picked .route .arrow {
    background: #ccc;
}

.route label {
    flex: 1;
    padding: 0 6px 0 2px;
}

.route select {
    flex: 1;
    line-height: 14px;
    padding: 0;
}

.route .route-side {
    width: 24px;
}

.route .inner {
    padding-left: 4px;
    gap: 7px;
}

.track-foot {
    height: 17px;
    flex: none;
    display: flex;
    align-items: center;
    padding-right: 6px;
    background: #27292c;
    color: #ddd;
    font-size: 11px;
}

.track-foot button {
    width: 48px;
}

.track-foot .blue {
    color: #3b95e0;
}

.size-pick {
    flex: 1;
    display: flex;
}

.size-pick select {
    flex: 1;
    text-align: center;
    text-align-last: center;
}

.foot-lines {
    margin-left: 12px;
}

/* Timeline: one grid column per beat */
.time-side {
    flex: 1;
    min-width: 0;
    display: flex;
    flex-direction: column;
}

.beats {
    display: grid;
    grid-template-columns: repeat(17, 1fr) 24px;
}

.ruler {
    height: 32px;
    background: #2c2d30;
    overflow: hidden;
    font-size: 11px;
}

.ruler span {
    min-width: 0;
    padding: 2px 0 0 1px;
    line-height: 14px;
    border-top: 6px solid #3c3e42;
    background:
        linear-gradient(#ddd, #ddd) 0 100% / 1px 5px no-repeat,
        linear-gradient(to right, #ddd 1px, transparent 1px) 0 100% / 25% 3px repeat-x;
}

.ruler .bar {
    font-size: 12px;
    background:
        linear-gradient(#ddd, #ddd) 0 100% / 1px 10px no-repeat,
        linear-gradient(to right, #ddd 1px, transparent 1px) 0 100% / 25% 3px repeat-x;
}

.ruler .in-loop {
    border-top-color: #6b7077;
    background-color: #383d45;
}

.marker-lane {
    position: relative;
    height: 31px;
    border-bottom: 4px solid #1c1d1f;
}

.marker-flag {
    position: absolute;
    left: 0;
    top: 1px;
    width: 34px;
    height: 17px;
    padding-left: 1px;
    line-height: 17px;
    background: #539ac4;
    color: #14202a;
    font-family: "Open Sans", sans-serif;
    font-size: 11px;
    clip-path: polygon(0 0, 100% 0, 25px 100%, 0 100%);
}

.marker-lane, .lane {
    border-left: 1px solid #ccc;
}

.marker-lane i, .lane i {
    background:
        linear-gradient(#303235, #303235) 0 0 / 1px 100% no-repeat,
        linear-gradient(to right, #27292b 1px, transparent 1px) 0 0 / 25% 100%,
        #1f2022;
}

.marker-lane .after, .lane .after {
    background-color: #222324;
}

.lane i.bar, .marker-lane i.bar {
    background-image: linear-gradient(#3f4144, #3f4144), linear-gradient(to right, #292b2d 1px, transparent 1px);
}

.lane.picked i {
    background-color: #272829;
}

.lane.picked .after {
    background-color: #2d2e2f;
}

.lane.picked i:not(.bar) {
    background-image: linear-gradient(#3b3c3e, #3b3c3e), linear-gradient(to right, #303133 1px, transparent 1px);
}

.lanes {
    flex: 1;
    min-height: 0;
    display: flex;
    background: #26282b;
}

.lane-list {
    flex: 1;
    display: flex;
    flex-direction: column;
    overflow: hidden;
    margin-right: -16px;
}

.lane {
    height: 97px;
    flex: none;
    border-bottom: 1px solid #303235;
}

.lane.tall {
    height: 170px;
}

.lane.rest {
    flex: 1;
    border-bottom: none;
}

.vscroll {
    width: 16px;
    z-index: 1;
    display: flex;
    flex-direction: column;
    align-items: center;
    padding: 4px 0 5px;
    background: #26282b;
}

.vscroll span {
    width: 5px;
    height: 83px;
    margin: 35px 0 auto;
    border-radius: 3px;
    background: #8b8c8f;
}

.up, .down {
    width: 9px;
    height: 6px;
    background: #85878b;
    clip-path: polygon(50% 0, 100% 100%, 0 100%);
}

.down {
    clip-path: polygon(0 0, 100% 0, 50% 100%);
}

.hscroll {
    height: 17px;
    flex: none;
    display: flex;
    align-items: center;
    gap: 12px;
    padding: 0 3px 0 7px;
    background: #27282c;
    color: #85878b;
}

.hscroll svg:last-child {
    margin-left: -3px;
}

.hscroll .thumb {
    width: 26px;
    height: 5px;
    border-radius: 3px;
    background: #8b8c8f;
}

/* Mixer */
.mixer {
    height: 421px;
    flex: none;
    display: flex;
    background: #27282c;
}

.mixer-side {
    width: 56px;
    display: flex;
    flex-direction: column;
    background: #333539;
}

.side-row {
    height: 22px;
    flex: none;
    display: flex;
    border-bottom: 1px solid #232427;
    background: #45474b;
    color: #c6c7c9;
}

.side-row.plain {
    height: 24px;
    align-items: center;
    justify-content: space-between;
    padding: 0 7px 0 8px;
    background: #242528;
}

.side-row.io button {
    flex: 1;
}

.side-row.io button + button {
    flex: none;
    width: 16px;
    border-left: 1px solid #232427;
}

.side-row.orange {
    height: 26px;
    background: #e09838;
}

.side-row.big {
    height: 26px;
}

.side-fill {
    flex: 1;
}

.console {
    flex: 1;
    min-width: 0;
    display: flex;
    flex-direction: column;
    border-left: 2px solid #131416;
}

.strips {
    flex: 1;
    display: flex;
}

.strip {
    width: 87px;
    height: 401px;
    display: flex;
    flex-direction: column;
    border-right: 2px solid #131416;
    background: #131416;
}

.strip-color {
    height: 3px;
    flex: none;
}

.strip-top {
    height: 83px;
    flex: none;
    display: flex;
    flex-direction: column;
    overflow: hidden;
    margin-bottom: 1px;
    border-top: 1px solid #1c1d1f;
    background: #3b3e43;
}

.strip.picked .strip-top, .strip.picked .strip-main {
    background: #5d646d;
}

.gain {
    height: 43px;
    flex: none;
    margin: 4px 6px 6px;
    border: 1px solid #202224;
    border-radius: 3px;
    text-align: center;
    color: #ccc;
    font-size: 11px;
    font-weight: bold;
    line-height: 19px;
}

.gain-top {
    height: 22px;
    display: flex;
    align-items: center;
    justify-content: space-between;
    padding: 0 14px 0 2px;
    background: #212326;
    color: #3d9be8;
    font-weight: normal;
}

.picked .gain {
    background: #4b4f54;
}

.picked .gain-top {
    padding-right: 18px;
    background: #2e3135;
}

.fat {
    height: 19px;
    flex: none;
    display: flex;
    align-items: center;
    gap: 3px;
    padding-left: 4px;
    border-bottom: 1px solid #1c1d1f;
    background: #34496f;
    color: #a8b5cc;
    font-size: 11px;
}

.insert {
    flex: none;
    height: 20px;
    display: flex;
    align-items: center;
    gap: 4px;
    padding: 0 4px 0 3px;
    color: #8f9194;
}

.insert span {
    flex: 1;
    line-height: 18px;
}

.insert svg {
    opacity: .7;
}

.strip-top.bare {
    justify-content: flex-end;
}

.insert-clip {
    height: 10px;
    flex: none;
    overflow: hidden;
    border-top: 1px solid #131416;
    background: #3b3e43;
}

.insert-clip .insert {
    height: 18px;
}

.strip-main {
    flex: 1;
    min-height: 0;
    display: flex;
    flex-direction: column;
    align-items: center;
    border-top: 1px solid #1c1d1f;
    background: #3b3e43;
}

.pan {
    width: 77px;
    height: 16px;
    margin-top: 4px;
}

.pan-row {
    position: relative;
    width: 100%;
    height: 23px;
    text-align: center;
    line-height: 23px;
    color: #d8d8d8;
}

.pan-row svg {
    position: absolute;
    left: 5px;
    top: 8px;
}

.ms-grid {
    width: 69px;
    height: 42px;
    flex: none;
    display: grid;
    grid-template-columns: 1fr 1fr;
    grid-template-rows: 19px 20px;
    gap: 1px;
    padding: 1px;
    border-radius: 3px;
    background: #16171a;
    font-size: 14px;
    color: #bbb;
}

.ms-grid button {
    background: linear-gradient(#42454a, #34373b);
}

.ms-grid .mon {
    background: #5fb2cd;
    color: #fff;
}

.picked .ms-grid {
    color: #e4e4e4;
}

.picked .ms-grid button {
    background: #4b4f57;
}

.level-text {
    height: 23px;
    flex: none;
    margin-right: 6px;
    line-height: 30px;
    color: #d8d8d8;
}

.fader-area {
    position: relative;
    width: 100%;
    height: 145px;
    flex: none;
    color: #a0a2a5;
    font-size: 8px;
    font-weight: bold;
}

.picked .fader-area {
    color: #c4c7ca;
}

.fader {
    appearance: none;
    position: absolute;
    left: 34px;
    top: 21px;
    width: 18px;
    height: 119px;
    margin: 0;
    background: none;
    writing-mode: vertical-lr;
    direction: rtl;
}

.fader::-webkit-slider-thumb {
    appearance: none;
    width: 18px;
    height: 37px;
    border: 1px solid #1a1a1a;
    border-radius: 3px;
    background: linear-gradient(#fff 2px, #777 3px, #bbb 6px, #fff 10px, #fff 17px, #444 17px, #444 18px, #fff 18px, #fff 27px, #bbb 31px, #777 32px, #fff 33px);
}

.master .fader {
    left: 31px;
}

.master .fader::-webkit-slider-thumb {
    background: linear-gradient(#6bb8de 2px, #24475a 3px, #366f8b 6px, #5aa5cb 10px, #5aa5cb 17px, #2a5468 17px, #2a5468 18px, #5aa5cb 18px, #5aa5cb 27px, #3c7b9a 31px, #1c4254 32px, #6bb8de 33px);
}

.strip-no {
    width: 100%;
    height: 18px;
    display: flex;
    align-items: center;
    justify-content: space-between;
    padding: 0 9px 0 16px;
    font-weight: bold;
    color: #bcbdbf;
}

.picked .strip-no {
    color: #eee;
}

.auto {
    width: 71px;
    height: 16px;
    flex: none;
    margin-top: 2px;
    border-radius: 1px;
    background: #232425;
    color: #77797b;
    line-height: 15px;
    font-size: 11px;
}

.picked .auto {
    background: #3c3e41;
    color: #8d8f92;
}

.strip-name {
    height: 15px;
    flex: none;
    border-radius: 0 0 5px 5px;
    text-align: center;
    line-height: 15px;
    white-space: nowrap;
}

.console-scroll {
    height: 17px;
    display: flex;
    align-items: center;
    justify-content: space-between;
    padding: 0 7px;
    color: #85878b;
}

.master {
    width: 86px;
    border-right: none;
    border-left: 1px solid #0c0c0d;
    background: #131416;
}

.master .strip-color {
    background: #44464d;
}

.master .strip-top, .master .strip-main {
    background: #2f3237;
}

.master .insert {
    height: 19px;
    color: #bbb;
}

.master .insert.post {
    border-top: 1px solid #1c1d1f;
    margin-top: auto;
}

.insert.post .pw {
    color: #1f8fef;
    opacity: 1;
}

.post-bar {
    height: 3px;
    flex: none;
    margin: 2px 0 1px;
    background: linear-gradient(to right, #565c62 79px, #2f3237 79px, #2f3237 81px, #565c62 81px);
}

.peaks {
    width: 77px;
    height: 16px;
    flex: none;
    margin: 4px 0 23px;
    display: flex;
    gap: 1px;
    padding: 1px;
    border-radius: 2px;
    background: #0c0c0d;
    color: #3b86b5;
    font-size: 11px;
    line-height: 14px;
    text-align: center;
}

.peaks span {
    flex: 1;
    background: #1f2124;
}

.master .ms-grid {
    grid-template-columns: repeat(6, 1fr);
}

.master .ms-grid button {
    grid-column: span 2;
}

.master .ms-grid button.wide {
    grid-column: span 3;
}

.master .ms-grid button.click {
    background: #4f8ba6;
    color: #fff;
}

.master .strip-name {
    background: #1b1c1e;
    color: #fff;
}

/* Browser */
.browser {
    width: 260px;
    padding: 3px 3px 3px 4px;
    border: 1px solid #335987;
    border-radius: 6px;
}

.browser-panel {
    height: 100%;
    display: flex;
    flex-direction: column;
    border: 1px solid #0c0c0d;
    border-radius: 4px;
    overflow: hidden;
    background: #383b40;
}

.browser-tabs {
    height: 36px;
    flex: none;
    display: flex;
    align-items: center;
    gap: 12px;
    border-bottom: 5px solid #4d5359;
    background: #26292c;
    font-size: 12px;
    color: #b5b6b8;
    white-space: nowrap;
}

.browser-tabs .home {
    flex: none;
    width: 24px;
    height: 31px;
    display: flex;
    align-items: center;
    justify-content: center;
    margin-right: -7px;
    background: #4d5359;
}

.browser-tabs .cloud-tab {
    margin: 0 -9px 0 -5px;
}

.browser-tabs button {
    margin-left: -7px;
}

.browser-list {
    flex: 1;
    list-style: none;
    padding: 31px 0 0 18px;
}

.browser-list li {
    height: 70px;
    display: flex;
    align-items: flex-start;
    gap: 21px;
    white-space: nowrap;
}

.tile {
    flex: none;
    width: 33px;
    height: 32px;
}

.tile.fx {
    border-radius: 2px;
    background: #4b4f58;
    color: #e0e0e0;
    font: bold 17px/32px Inter, sans-serif;
    text-align: center;
}

.browser-list h3 {
    color: #e8e8e8;
    font-size: 16px;
    font-weight: 300;
    line-height: 20px;
    margin: -5px 0 7px;
}

.browser-list p {
    line-height: 18px;
}

.browser-actions {
    display: flex;
    flex-direction: column;
    gap: 10px;
    padding: 0 35px 21px;
}

.browser-actions button {
    height: 26px;
    border-radius: 4px;
    background: #414143;
    font-size: 13px;
}

/* Transport */
.transport-bar {
    height: 48px;
    flex: none;
    display: flex;
    align-items: flex-start;
    border-top: 1px solid #0c0c0d;
    border-bottom: 2px solid #232427;
    background: #383b40;
}

.transport {
    width: 1353px;
    height: 41px;
    margin-left: 198px;
    padding-left: 6px;
    display: grid;
    grid-template-columns: 50px 70px 44px 71px 81px 106px 146px 292px 131px 64px 60px 60px 50px 1fr;
    background: #161616;
    clip-path: polygon(0 0, 100% 0, 1341px 100%, 9px 100%);
}

.cell {
    display: flex;
    flex-direction: column;
    padding-top: 6px;
    white-space: nowrap;
}

.cell b {
    font-size: 13px;
    font-weight: normal;
    line-height: 16px;
    color: #ddd;
}

.cell .ms {
    font-size: 12px;
}

.cell strong {
    font: bold 18px/18px Roboto, sans-serif;
    color: #ddd;
}

.cell small {
    font-size: 11px;
    line-height: 16px;
    color: #8e8f91;
}

.center {
    align-items: center;
}

.cell.rate {
    padding-left: 3px;
}

.unit {
    display: flex;
    align-items: center;
    gap: 6px;
    padding-left: 45px;
}

.unit.bars {
    padding-left: 62px;
    margin-top: -2px;
}

.perf {
    width: 65px;
    height: 6px;
    flex: none;
    margin-bottom: 1px;
    background: linear-gradient(to right, #2f3235 92%, #232527 92%);
}

.center .perf:first-child {
    margin-top: 1px;
}

.buttons {
    display: flex;
    align-items: flex-start;
    color: #c4c4c4;
}

.buttons button {
    height: 40px;
}

.w1 {
    width: 24px;
}

.w2 {
    width: 28px;
}

.w3 {
    width: 38px;
}

.w4 {
    width: 46px;
}

.locators {
    padding-left: 9px;
    padding-top: 5px;
}

.locators div {
    display: flex;
    gap: 13px;
}

.locators em {
    width: 9px;
    font-style: normal;
    line-height: 16px;
    color: #3f7fa0;
}

.mini-grid {
    display: grid;
    grid-template-columns: 1fr 1fr;
    align-items: center;
    justify-items: center;
    padding: 5px 0;
}

.metro-icons {
    height: 15px;
    display: flex;
    align-items: center;
    gap: 9px;
    color: #999;
}

.out {
    padding-left: 11px;
}

.out .perf {
    width: 90px;
    height: 5px;
    margin-bottom: 0;
    border-bottom: 1px solid #161616;
    background: linear-gradient(to right, #2f3235 75%, #232527 75%);
}

.out-row {
    display: flex;
    align-items: center;
    gap: 6px;
    margin-top: 7px;
}

.level {
    width: 68px;
    height: 10px;
    background: repeating-linear-gradient(to right, transparent 0 1px, #161616 1px 2px), linear-gradient(to right, #6cc4ef 74%, #44484c 74%);
}

.views {
    height: 45px;
    margin-left: auto;
    display: flex;
    color: #ddd;
    font-size: 13px;
}

.views button {
    width: 56px;
    border-left: 1px solid #26282b;
}

.views button:last-child {
    width: 65px;
}

.views .on {
    background: #347dd4;
    color: #eee;
}
```
FILE: script.js
```js
const icon = (id, w, h, cls = "") => `<svg class="${cls}" width="${w}" height="${h}"><use href="#${id}"/></svg>`;

const tracks = [
    { no: 2, name: "Headset Mic", color: "#00c3ea", picked: true, side: icon("ring", 12, 12), note: "Record your voice in this track.\n\nAdjust the Fat Channel to your taste using the controls within Studio One or Universal Control." },
    { no: 3, name: "Line-in L & R", color: "#0560e0", rec: true, side: icon("stereo", 16, 10), note: "Record a stereo line-in source to this track.\n\nAdjust the Fat Channel to your taste using the controls within Studio One or Universal Control." },
    { no: 4, name: "Stream Mix A", color: "#f3c81c", rec: true, cut: true, note: "Record audio from an external application using this track." }
];

const routes = t => `
    <div class="track-rows">
        <input class="volume" type="range" value="76" aria-label="${t.name} volume">
        <div class="route"><label><select aria-label="Input"><option>${t.name}</option></select><i class="arrow"></i></label><button class="route-side" aria-label="Mode">${t.side}</button></div>
        <div class="route"><label class="inner">${icon("fork", 9, 9)}<select aria-label="Group"><option>없음</option></select><i class="arrow"></i></label></div>
        <div class="route"><label class="inner">${icon("layers", 9, 9)}<select aria-label="Layer"><option>${t.name} 1</option></select><i class="arrow"></i></label></div>
    </div>`;

document.getElementById("tracks").innerHTML = tracks.map(t => `
    <div class="track ${t.picked ? "picked" : ""} ${t.cut ? "cut" : ""}">
        <div class="track-color" style="background:${t.color}"><span>${icon("curve", 8, 7)}</span></div>
        <div class="track-note"><div>${t.note}</div></div>
        <div class="track-main">
            <span class="track-no">${t.no}</span>
            <div class="track-buttons">
                <button>M</button><button>S</button>
                <button class="${t.rec ? "rec" : ""}" aria-label="Record">${icon("dot", 11, 11)}</button>
                <button aria-label="Monitor">${icon("half", 12, 12)}</button>
            </div>
            <span class="track-name">${t.name}</span>
            ${icon("wave", 16, 13)}
            ${t.cut ? "" : routes(t)}
        </div>
        <div class="track-edge"></div>
    </div>`).join("");

// 17 beats are visible, the loop ends on bar 4
const LOOP_END = 12;
const beatClass = i => (i % 4 === 0 ? "bar " : "") + (i < LOOP_END ? "in-loop" : "after");

document.getElementById("ruler").innerHTML = Array.from({ length: 18 }, (_, i) => {
    const bar = Math.floor(i / 4) + 1;
    const label = i === 17 ? "5.2" : i % 4 === 0 ? bar : `${bar}.${i % 4 + 1}`;
    return `<span class="${beatClass(i)}">${label}</span>`;
}).join("");

document.querySelectorAll(".marker-lane, .lane").forEach(lane => {
    lane.insertAdjacentHTML("beforeend", Array.from({ length: 18 }, (_, i) => `<i class="${beatClass(i)}"></i>`).join(""));
});

const scales = {
    post: { labels: [["0", 32], ["-6", 39], ["-12", 50], ["-24", 72], ["-36", 94], ["-48", 116], ["-60", 135]], zero: 29, ticks: [40, 51, 72, 94, 115, 137] },
    input: { labels: [["10", 21], ["6", 31], ["0", 47], ["-6", 64], ["-12", 78], ["-24", 95], ["-36", 111], ["-48", 123]], zero: 47, ticks: [19, 30, 64, 78, 95, 112, 124, 133] },
    master: { labels: [["6", 10], ["0", 18], ["-6", 30], ["-12", 42], ["-24", 66], ["-36", 90], ["-48", 114], ["-60", 135]], zero: 19, ticks: [7, 13, 25, 31, 37, 66, 90, 113, 137] }
};

const faderArea = (name, kind) => {
    const s = scales[kind];
    const m = kind === "master";
    const meter = m ? 53 : 17;
    const track = m ? 33 : 36;
    const cx = m ? 18 : 67;
    const list = m
        ? `<path d="M10 6h12" stroke="#4b4d52" stroke-width="3"/><path d="M10 10.500h12" stroke="#5cb9ea" stroke-width="3"/>`
        : `<path d="M61 5.500h11M61 9.500h11M61 13.500h11" stroke="#55585b" stroke-width="3"/>`;
    return `<div class="fader-area">
        <svg width="85" height="145" viewBox="0 0 85 145">
            <rect x="${meter - .5}" y="5.500" width="14" height="134" rx="2" fill="#222426" stroke="#17181a"/>
            ${s.ticks.map(y => `<path d="M${meter + 2} ${y}.500h9" stroke="#1d4a68"/>`).join("")}
            <path d="M${meter + 2} ${s.zero}.500h9" stroke="#b5bcc0"/>
            <rect x="${track}" y="55" width="14" height="85" rx="2" fill="#fff" opacity=".13"/>
            <path d="M${track + 1} 72.500h12M${track + 1} 86.500h12M${track + 1} 99.500h12M${track + 1} 108.500h12M${track + 1} 116.500h12" stroke="#fff" opacity=".25"/>
            <rect x="${track + 6}" y="21" width="2" height="102" fill="#1c1d1f"/>
            ${s.labels.map(([t, y]) => `<text x="${m ? 80 : 14}" y="${y + 3}" text-anchor="end" fill="currentColor">${t}</text>`).join("")}
            ${list}
            <circle cx="${cx}" cy="129" r="8" fill="#fff" opacity=".45"/>
            <path d="M${cx - 5} 126h4.500v6h-4.500zM${cx + 2} 125.500v7M${cx + 5} 125.500v7" fill="none" stroke="#333" stroke-width="1.200"/>
        </svg>
        <input class="fader" type="range" value="90" aria-label="${name} fader">
    </div>`;
};

const insertRow = (text, cls = "") => `<div class="insert ${cls}">${icon("power", 11, 11, "pw")}<span>${text}</span><i class="arrow"></i>${icon("plus", 10, 10)}</div>`;

const channels = [
    { no: 1, name: "Mic/Insturment", color: "#009cd9", ink: "#e8f4fa", gain: "35 dB", sub: "48V", arc: "M4 13A7 7 0 0 1 11.500 2.500", rec: true, mon: true },
    { no: 2, name: "Headset Mic", color: "#00c3ea", ink: "#10262c", gain: "0 dB", sub: "", picked: true },
    { no: 3, name: "Line-in L & R", color: "#0560e0", ink: "#e8eefa", rec: true },
    { no: 4, name: "Stream Mix A", color: "#f3c81c", ink: "#22200f", rec: true },
    { no: 5, name: "Stream Mix B", color: "#c72206", ink: "#f6e8e6", rec: true }
];

document.getElementById("strips").innerHTML = channels.map(c => `
    <div class="strip ${c.picked ? "picked" : ""}">
        <div class="strip-color" style="background:${c.color}"></div>
        <div class="strip-top ${c.gain ? "" : "bare"}">
            ${c.gain ? `<div class="gain"><div class="gain-top">
                <svg width="18" height="18" viewBox="0 0 18 18"><circle cx="9" cy="9" r="8" fill="#111"/>${c.arc ? `<path d="${c.arc}" fill="none" stroke="#3d9be8" stroke-width="3"/>` : `<path d="M4 14l2-2" stroke="#ccc" stroke-width="1.500"/>`}</svg>
                <span>${c.gain}</span></div>${c.sub}</div>
            <div class="fat">${icon("fx-chip", 10, 10)}Fat Channel</div>` : ""}
            <div class="insert-clip">${insertRow("인서트")}</div>
        </div>
        <div class="strip-color" style="background:${c.color}"></div>
        <div class="strip-main">
            <svg class="pan" viewBox="0 0 77 16"><rect x=".5" y=".5" width="76" height="15" rx="2" fill="#1b1c1d" stroke="#0a0a0a"/><path d="M1 1h75L38.500 15z" fill="#0b0b0b"/><path d="M38.500 1v14" stroke="#35b9e6" stroke-width="2"/></svg>
            <div class="pan-row">${c.gain ? "" : `<svg width="8" height="6" viewBox="0 0 8 6"><path d="M1 .5h6L4 5z" fill="#2c2e31" stroke="#1d1e20"/></svg>`}&lt;C&gt;</div>
            <div class="ms-grid">
                <button>M</button><button>S</button>
                <button class="${c.rec ? "rec" : ""}" aria-label="Record">${icon("dot", 11, 11)}</button>
                <button class="${c.mon ? "mon" : ""}" aria-label="Monitor">${icon("half", 12, 12)}</button>
            </div>
            <div class="level-text">0dB</div>
            ${faderArea(c.name, c.picked ? "input" : "post")}
            <div class="strip-no">${c.no}${icon("wave", 16, 13)}</div>
            <button class="auto">오토: 오프</button>
        </div>
        <div class="strip-name" style="background:${c.color};color:${c.ink}">${c.name}</div>
    </div>`).join("");

document.getElementById("master").innerHTML = `
    <div class="strip-color"></div>
    <div class="strip-top">${insertRow("인서트")}${insertRow("포스트", "post")}<div class="post-bar"></div></div>
    <div class="strip-color"></div>
    <div class="strip-main">
        <div class="peaks"><span>-∞</span><span>-∞</span></div>
        <div class="ms-grid">
            <button class="wide">M</button><button class="wide">S</button>
            <button class="click" aria-label="Metronome">${icon("metro", 13, 13)}</button>
            <button aria-label="Fader mode"><svg width="8" height="12" viewBox="0 0 8 12"><path d="M4 0v12M1 4h6M1 7.500h6" stroke="currentColor" stroke-width="2"/></svg></button>
            <button aria-label="Stereo">${icon("stereo", 16, 10)}</button>
        </div>
        <div class="level-text">0dB</div>
        ${faderArea("Playback", "master")}
        <div class="strip-no"></div>
        <button class="auto">오토: 오프</button>
    </div>
    <div class="strip-name">Playback</div>`;
```
